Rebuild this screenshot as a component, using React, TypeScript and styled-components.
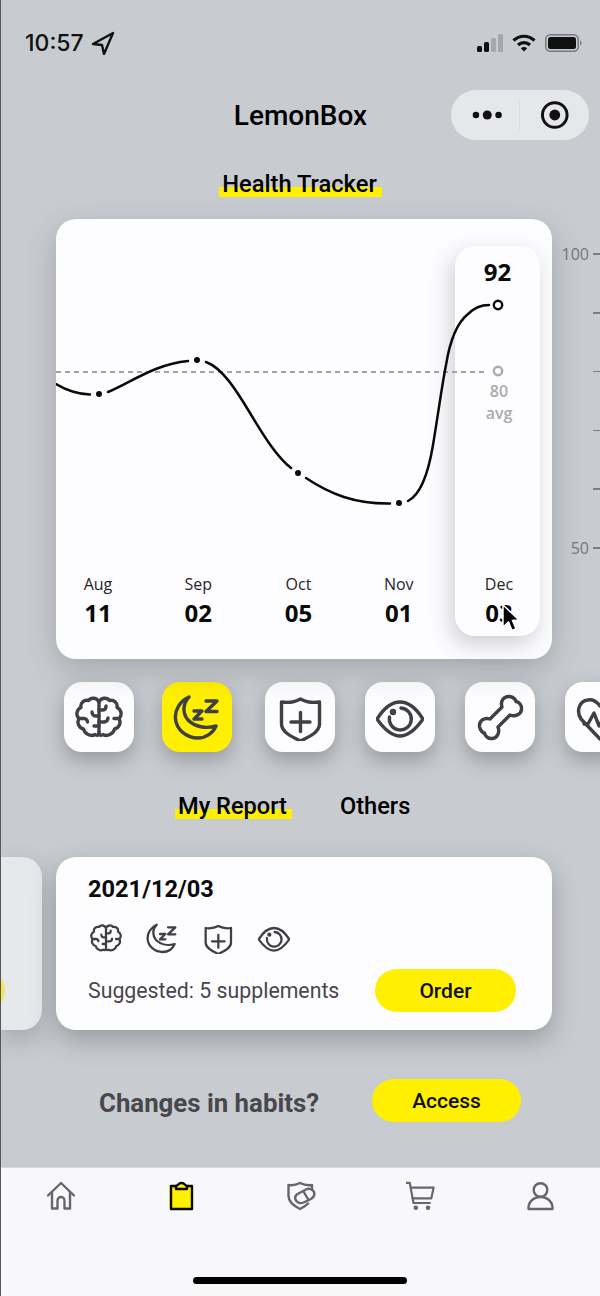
import React from 'react';
import styled, { createGlobalStyle } from 'styled-components';

const YELLOW = '#fff000';
const INK = '#3f3f44';

const GlobalStyle = createGlobalStyle`
  html, body {
    margin: 0;
    padding: 0;
    background: #c8cbd0;
  }
  * {
    box-sizing: border-box;
  }
`;

const months = [
  { name: 'Aug', day: '11' },
  { name: 'Sep', day: '02' },
  { name: 'Oct', day: '05' },
  { name: 'Nov', day: '01' },
  { name: 'Dec', day: '03' },
];

const axisRows = ['100', '', '', '', '', '50'];

const BRAIN_LOBES =
  'M24 9C22 4.500 16 4 13.500 7.500C9 6.500 5 10 6 14.500C1.500 16.500 0.500 22.500 4 25.500C1.500 30 4 35 8.500 36C9.500 41 16 44 20 41.500C22 43 24 42 24 40';

// Drawn icons, all on a 48 unit grid so the tiles and the report card can share them
const BrainIcon = () => (
  <>
    <path d={BRAIN_LOBES} />
    <path d={BRAIN_LOBES} transform="matrix(-1 0 0 1 48 0)" />
    <path d="M24 9V40" />
    <path d="M24 23H20.500C18.500 23 17 21.500 17 19" />
    <path d="M4 25.500H9C11 25.500 12.500 27 12.500 29" />
    <path d="M24 33H19" />
    <path d="M24 17H28C30 17 31 15.500 31 13" />
    <path d="M24 29H29C31.500 29 33 27 33 25" />
    <path d="M44 25.500H39" />
  </>
);

const SleepIcon = () => (
  <>
    <path d="M16 4C7 8 1.500 17 2.500 26C3.500 37 14 45 25 45C33 45 40 40 43 33C33 36 22 34 15 27C9 20 10 10 16 4Z" />
    <path d="M21 18H29L21 26H29" />
    <path d="M33 8H44L33 18.500H44" />
  </>
);

const ShieldIcon = () => (
  <>
    <path d="M24.500 6C30 9 37 10 43.500 9V31C43.500 39 33 44 24.500 48C16 44 5.500 39 5.500 31V9C12 10 19 9 24.500 6Z" />
    <path d="M24.500 19.500V38.500M15 29H34" />
  </>
);

const EyeIcon = () => (
  <>
    <path d="M1 26C8 15 15 9 24 9C33 9 40 15 47 26C40 36 33 43 24 43C15 43 8 36 1 26Z" />
    <path d="M25 15A11 11 0 1 1 13.500 24" />
    <circle cx="17" cy="19" r="1.500" />
  </>
);

const BoneIcon = () => (
  <path d="M26 14C24 8 28 3 33.500 3.500C37.500 4 40 7 40 8.500C43 9 46 12 45.500 16.500C45 21.500 39 24 34 22L22 34C24 39 21.500 45 16.500 45.500C12 46 9 43 8.500 40C7 40 4 37.500 3.500 33.500C3 28 8 24 14 26Z" />
);

const HeartIcon = () => (
  <>
    <path d="M24 46L5 26C0 18 3 8 12 7C17 6 21 9 24 13C27 9 31 6 36 7C45 8 48 18 43 26Z" />
    <path d="M8 31H12L18 20L23 33L28 25L31 29H40" />
  </>
);

const Glyph = styled.svg<{ $size: number; $weight: number }>`
  display: block;
  flex: none;
  width: ${(p) => p.$size}px;
  height: ${(p) => p.$size}px;
  fill: none;
  stroke: currentColor;
  stroke-width: ${(p) => p.$weight};
  stroke-linecap: round;
  stroke-linejoin: round;
`;

const tiles = [
  { key: 'brain', Icon: BrainIcon, active: false },
  { key: 'sleep', Icon: SleepIcon, active: true },
  { key: 'shield', Icon: ShieldIcon, active: false },
  { key: 'eye', Icon: EyeIcon, active: false },
  { key: 'bone', Icon: BoneIcon, active: false },
  { key: 'heart', Icon: HeartIcon, active: false },
];

const App = () => {
  return (
    <Page>
      <GlobalStyle />

      <StatusBar>
        <StatusLeft>
          <Time>10:57</Time>
          <svg width="24" height="24" viewBox="0 0 24 24" fill="none" stroke="#111" strokeWidth="2.400" strokeLinejoin="round">
            <path d="M22 2L2 13L11 14L13 23Z" />
          </svg>
        </StatusLeft>
        <StatusRight>
          <svg width="26" height="18" viewBox="0 0 26 18">
            <rect x="0" y="12" width="5" height="6" rx="1.500" fill="#111" />
            <rect x="7" y="8" width="5" height="10" rx="1.500" fill="#111" />
            <rect x="14" y="4" width="5" height="14" rx="1.500" fill="#a5a7ab" />
            <rect x="21" y="0" width="5" height="18" rx="1.500" fill="#a5a7ab" />
          </svg>
          <svg width="24" height="18" viewBox="0 0 24 18" fill="none" stroke="#111" strokeWidth="3.200">
            <path d="M1.500 6.500C7.500 0.800 16.500 0.800 22.500 6.500" />
            <path d="M6 11C9.500 7.700 14.500 7.700 18 11" />
            <path d="M12 17.500L8.800 14.300C10.600 12.700 13.400 12.700 15.200 14.300Z" fill="#111" stroke="none" />
          </svg>
          <svg width="38" height="18" viewBox="0 0 38 18">
            <rect x="0.750" y="0.750" width="32.500" height="16.500" rx="4.500" fill="none" stroke="#77797d" strokeWidth="1.500" />
            <rect x="3" y="3" width="28" height="12" rx="2.500" fill="#111" />
            <path d="M35 6.500C37 7 37 11 35 11.500Z" fill="#77797d" />
          </svg>
        </StatusRight>
      </StatusBar>

      <NavBar>
        <span />
        <AppTitle>LemonBox</AppTitle>
        <Capsule>
          <svg width="32" height="12" viewBox="0 0 32 12" fill="#111">
            <circle cx="4" cy="6" r="3.300" />
            <circle cx="15.500" cy="6" r="4.600" />
            <circle cx="27" cy="6" r="3.300" />
          </svg>
          <CapsuleDivider />
          <svg width="30" height="30" viewBox="0 0 30 30">
            <circle cx="15" cy="15" r="12.500" fill="none" stroke="#111" strokeWidth="3" />
            <circle cx="15" cy="15" r="5.500" fill="#111" />
          </svg>
        </Capsule>
      </NavBar>

      <SectionHead>
        <Marked $size={23.7}>Health Tracker</Marked>
      </SectionHead>

      <ChartRow>
        <ChartCard>
          <Highlight>
            <PeakValue>92</PeakValue>
            <AvgLabel>80</AvgLabel>
            <AvgLabel>avg</AvgLabel>
          </Highlight>
          <Curve viewBox="56 219 496 353">
            <path d="M56 372H488" fill="none" stroke="#a3a3a8" strokeWidth="2" strokeDasharray="5 4" />
            <g fill="none" stroke="#0a0a0a" strokeWidth="2.500" strokeLinecap="round">
              <path d="M56 384C66 390 76 394 90 394.500" />
              <path d="M108 392C130 383 155 364 188 361" />
              <path d="M206 362C222 368 235 388 250 413C264 436 276 456 291 468" />
              <path d="M306 478C330 494 355 504 390 503.500" />
              <path d="M408 501C420 495 428 475 433 445C438 415 442 385 446 365C450 340 458 322 468 314C474 308 480 305 489 305" />
            </g>
            <g fill="#0a0a0a">
              <circle cx="99" cy="394" r="3" />
              <circle cx="197" cy="360" r="3" />
              <circle cx="298" cy="473" r="3" />
              <circle cx="399" cy="503" r="3" />
            </g>
            <circle cx="498" cy="305" r="4.200" fill="none" stroke="#0a0a0a" strokeWidth="2.400" />
            <circle cx="498" cy="371" r="4.200" fill="none" stroke="#aaaaad" strokeWidth="2.400" />
          </Curve>
          <MonthRow>
            {months.map((m) => (
              <Month key={m.name}>
                <MonthName>{m.name}</MonthName>
                <MonthDay>{m.day}</MonthDay>
              </Month>
            ))}
          </MonthRow>
          <Pointer width="20" height="30" viewBox="0 0 20 30">
            <path d="M2 2V24L7.500 19L11 27.500L15 25.800L11.500 17.500L18 17Z" fill="#000" stroke="#fff" strokeWidth="1.500" />
          </Pointer>
        </ChartCard>
        <Axis>
          {axisRows.map((label, index) => (
            <AxisRow key={index}>
              {label && <AxisLabel>{label}</AxisLabel>}
              <AxisTick />
            </AxisRow>
          ))}
        </Axis>
      </ChartRow>

      <TileRow>
        {tiles.map(({ key, Icon, active }) => (
          <Tile key={key} $active={active}>
            <Glyph $size={48} $weight={3.4} viewBox="0 0 48 48">
              <Icon />
            </Glyph>
          </Tile>
        ))}
      </TileRow>

      <ReportTabs>
        <Marked $size={23.6}>My Report</Marked>
        <PlainTab>Others</PlainTab>
      </ReportTabs>

      <ReportRow>
        <PeekCard>
          <PeekButton />
        </PeekCard>
        <ReportCard>
          <ReportDate>2021/12/03</ReportDate>
          <SmallIcons>
            {tiles.slice(0, 4).map(({ key, Icon }) => (
              <Glyph key={key} $size={32} $weight={3.4} viewBox="0 0 48 48">
                <Icon />
              </Glyph>
            ))}
          </SmallIcons>
          <ReportFooter>
            <Suggested>Suggested: 5 supplements</Suggested>
            <PillButton $width={141}>Order</PillButton>
          </ReportFooter>
        </ReportCard>
      </ReportRow>

      <HabitsRow>
        <HabitsText>Changes in habits?</HabitsText>
        <PillButton $width={149}>Access</PillButton>
      </HabitsRow>

      <TabBar>
        <TabIcons>
          <TabSlot>
            <Glyph $size={30} $weight={2.4} viewBox="0 0 30 30">
              <path d="M2 14.500L15 2L28 14.500" />
              <path d="M6 11V27.500H11.500V19.500A3.500 3.500 0 0 1 18.500 19.500V27.500H24V11" />
            </Glyph>
          </TabSlot>
          <TabSlot $active>
            <Glyph $size={30} $weight={2.4} viewBox="0 0 30 30">
              <path d="M3.500 4H25V28H3.500Z" fill={YELLOW} stroke="none" />
              <path d="M10 5H5V28H26V5H21" />
              <path d="M10 5C12 5 12 2 15.500 2C19 2 19 5 21 5V8H10Z" fill={YELLOW} />
            </Glyph>
          </TabSlot>
          <TabSlot>
            <Glyph $size={30} $weight={2.4} viewBox="0 0 30 30">
              <path d="M14 2C18 4 22 4.500 26 4V9" />
              <path d="M14 2C10 4 6 4.500 2.500 4V15C2.500 21 9 25.500 14 28C17 26.500 20 24.800 22 22.500" />
              <path d="M12.500 12.500L20 8.500C23 7 27 8 28 11C29 14 27.500 16.500 25 18L17.500 21.500C14 23 10.500 21.500 9.500 18.500C8.500 16 10 13.800 12.500 12.500Z" />
              <path d="M17.500 10.500L22 18" />
            </Glyph>
          </TabSlot>
          <TabSlot>
            <Glyph $size={30} $weight={2.3} viewBox="1.500 0 32 32">
              <path d="M1 2H5.500L9.500 23.500H27" />
              <path d="M6.500 7H31L28.500 18.500H8.500" />
              <circle cx="12" cy="28.500" r="1.300" />
              <circle cx="25" cy="28.500" r="1.300" />
            </Glyph>
          </TabSlot>
          <TabSlot>
            <Glyph $size={30} $weight={2.4} viewBox="0.500 0 30 30">
              <circle cx="15" cy="9" r="6.800" />
              <path d="M3 28H27C27.500 21 22 16 15 16C8 16 2.500 21 3 28Z" />
            </Glyph>
          </TabSlot>
        </TabIcons>
        <HomeIndicator />
      </TabBar>
    </Page>
  );
};

const Page = styled.div`
  position: relative;
  display: flex;
  flex-direction: column;
  width: 600px;
  height: 1296px;
  overflow: hidden;
  background: #c8cbd0;
  border-left: 1px solid #55575b;
  font-family: Roboto, 'Liberation Sans', sans-serif;
  color: #0a0a0a;
`;

const StatusBar = styled.div`
  display: flex;
  align-items: center;
  justify-content: space-between;
  height: 90px;
  padding: 0 17px 4px 24px;
`;

const StatusLeft = styled.div`
  display: flex;
  align-items: center;
  gap: 7px;
`;

const Time = styled.span`
  font-family: Inter, 'Liberation Sans', sans-serif;
  font-size: 23px;
  font-weight: 500;
  color: #111;
`;

const StatusRight = styled.div`
  display: flex;
  align-items: center;
  gap: 9px;
`;

const NavBar = styled.div`
  display: grid;
  grid-template-columns: 1fr auto 1fr;
  align-items: center;
  height: 50px;
  padding: 0 11px;
`;

const AppTitle = styled.h1`
  margin: 0;
  font-size: 28px;
  font-weight: 500;
  color: #000;
`;

const Capsule = styled.div`
  justify-self: end;
  display: flex;
  align-items: center;
  width: 138px;
  height: 50px;
  padding: 0 19px 0 21px;
  border-radius: 25px;
  background: #e6e7ea;
`;

const CapsuleDivider = styled.div`
  width: 1px;
  height: 30px;
  margin: 0 20px 0 16px;
  background: #dadbde;
`;

const SectionHead = styled.div`
  display: flex;
  justify-content: center;
  height: 79px;
  padding-top: 29px;
`;

const Marked = styled.span<{ $size: number }>`
  display: inline-block;
  height: 30px;
  padding: 0 5px 0 3px;
  font-size: ${(p) => p.$size}px;
  font-weight: 500;
  line-height: 30px;
  color: #000;
  background: linear-gradient(transparent 60%, ${YELLOW} 60%, ${YELLOW} 93%, transparent 93%);
`;

const ChartRow = styled.div`
  display: flex;
  align-items: flex-start;
  padding-left: 55px;
`;

const ChartCard = styled.div`
  position: relative;
  flex: none;
  width: 496px;
  height: 440px;
  border-radius: 20px;
  background: #fdfcfe;
  box-shadow: 0 10px 30px rgba(60, 62, 68, 0.26);
`;

const Highlight = styled.div`
  position: absolute;
  top: 27px;
  left: 399px;
  display: flex;
  flex-direction: column;
  align-items: center;
  width: 85px;
  height: 390px;
  padding-top: 12px;
  border-radius: 20px;
  background: #fdfcfe;
  box-shadow: -4px 8px 22px rgba(60, 62, 68, 0.24);
  font-family: 'Open Sans', sans-serif;
`;

const PeakValue = styled.div`
  height: 28px;
  margin-bottom: 94px;
  font-size: 24px;
  font-weight: 700;
  line-height: 28px;
  color: #0a0a0a;
`;

const AvgLabel = styled.div`
  height: 22px;
  padding-left: 3px;
  font-size: 16px;
  font-weight: 600;
  line-height: 22px;
  color: #ababae;
`;

const Curve = styled.svg`
  position: relative;
  display: block;
  width: 496px;
  height: 353px;
`;

const MonthRow = styled.div`
  position: relative;
  display: flex;
  justify-content: space-between;
  padding: 0 33px 0 22px;
  font-family: 'Open Sans', sans-serif;
`;

const Month = styled.div`
  display: flex;
  flex-direction: column;
  align-items: center;
  width: 40px;
`;

const MonthName = styled.div`
  height: 24px;
  font-size: 16px;
  line-height: 24px;
  color: #26262a;
`;

const MonthDay = styled.div`
  height: 32px;
  margin-top: 1px;
  font-size: 24px;
  font-weight: 700;
  line-height: 32px;
  color: #0a0a0a;
`;

const Pointer = styled.svg`
  position: absolute;
  top: 384px;
  left: 445px;
`;

const Axis = styled.div`
  display: flex;
  flex: 1;
  flex-direction: column;
  gap: 38.8px;
  padding-top: 25px;
`;

const AxisRow = styled.div`
  display: flex;
  align-items: center;
  justify-content: flex-end;
  gap: 4px;
  height: 20px;
`;

const AxisLabel = styled.span`
  font-family: 'Open Sans', sans-serif;
  font-size: 16px;
  color: #77787c;
`;

const AxisTick = styled.span`
  width: 7px;
  height: 1.500px;
  background: #7c7d81;
`;

const TileRow = styled.div`
  display: flex;
  flex: none;
  gap: 30.3px;
  margin-top: 23px;
  padding-left: 63px;
`;

const Tile = styled.div<{ $active: boolean }>`
  display: flex;
  flex: none;
  align-items: center;
  justify-content: center;
  width: 70px;
  height: 70px;
  margin-left: ${(p) => (p.$active ? '-2px' : '0')};
  margin-right: ${(p) => (p.$active ? '2px' : '0')};
  border-radius: 18px;
  background: ${(p) => (p.$active ? YELLOW : '#fdfcfe')};
  color: ${INK};
  box-shadow: 0 8px 20px rgba(60, 62, 68, 0.36);
`;

const ReportTabs = styled.div`
  display: flex;
  align-items: center;
  height: 30px;
  margin-top: 39px;
  padding-left: 174px;
`;

const PlainTab = styled.span`
  margin-left: 48px;
  font-size: 23.6px;
  font-weight: 500;
  color: #000;
`;

const ReportRow = styled.div`
  display: flex;
  gap: 14px;
  height: 173px;
  margin-top: 36px;
`;

const PeekCard = styled.div`
  flex: none;
  width: 41px;
  overflow: hidden;
  border-radius: 0 20px 20px 0;
  background: #e6e8eb;
  box-shadow: 0 10px 24px rgba(60, 62, 68, 0.25);
`;

const PeekButton = styled.div`
  width: 141px;
  height: 43px;
  margin: 112px 0 0 -137px;
  border-radius: 22px;
  background: #efe85c;
`;

const ReportCard = styled.div`
  flex: none;
  width: 496px;
  padding: 16px 36px 0 32px;
  border-radius: 20px;
  background: #fdfcfe;
  box-shadow: 0 10px 26px rgba(60, 62, 68, 0.34);
`;

const ReportDate = styled.div`
  height: 32px;
  font-size: 23.6px;
  font-weight: 700;
  line-height: 32px;
  color: #0a0a0a;
`;

const SmallIcons = styled.div`
  display: flex;
  gap: 24px;
  margin: 17px 0 0 2px;
  color: ${INK};
`;

const ReportFooter = styled.div`
  display: flex;
  align-items: center;
  justify-content: space-between;
  margin-top: 15px;
`;

const Suggested = styled.span`
  font-size: 21.3px;
  color: #47474c;
`;

const PillButton = styled.button<{ $width: number }>`
  flex: none;
  width: ${(p) => p.$width}px;
  height: 43px;
  padding: 0;
  border: none;
  border-radius: 22px;
  background: ${YELLOW};
  font-family: Roboto, sans-serif;
  font-size: 21px;
  font-weight: 500;
  color: #0f0f0f;
`;

const HabitsRow = styled.div`
  display: flex;
  align-items: center;
  gap: 53px;
  height: 43px;
  margin-top: 49px;
  padding-left: 98px;
`;

const HabitsText = styled.span`
  padding-top: 4px;
  font-size: 25.8px;
  font-weight: 700;
  color: #47474c;
`;

const TabBar = styled.div`
  display: flex;
  flex: 1;
  flex-direction: column;
  margin-top: 45px;
  border-top: 1px solid #d9d9dd;
  background: #f8f7fa;
`;

const TabIcons = styled.div`
  display: grid;
  grid-template-columns: repeat(5, 120px);
  padding-top: 13px;
`;

const TabSlot = styled.div<{ $active?: boolean }>`
  display: flex;
  justify-content: center;
  color: ${(p) => (p.$active ? '#0a0a0a' : '#66666b')};
`;

const HomeIndicator = styled.div`
  width: 214px;
  height: 7px;
  margin: auto 0 12px 192px;
  border-radius: 4px;
  background: #000;
`;

export default App;
